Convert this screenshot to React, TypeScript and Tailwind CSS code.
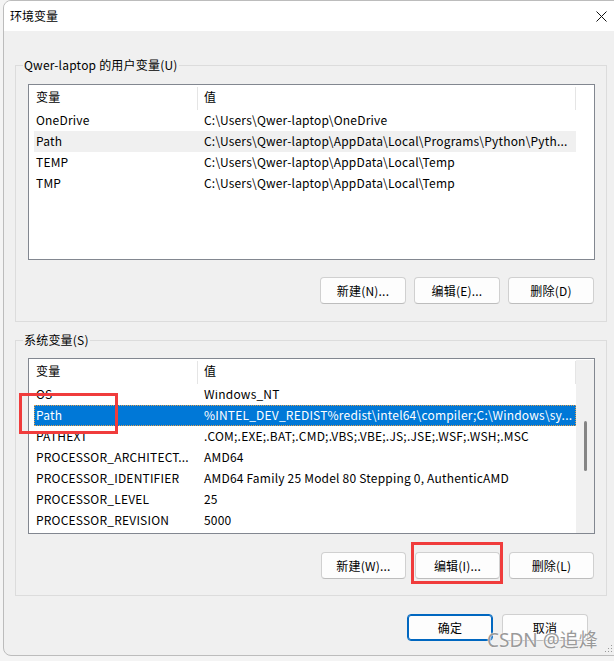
import React from "react";

type Row = { name: string; value: string; state?: "hover" | "selected" | "clipped" };

const userRows: Row[] = [
  { name: "OneDrive", value: "C:\\Users\\Qwer-laptop\\OneDrive" },
  { name: "Path", value: "C:\\Users\\Qwer-laptop\\AppData\\Local\\Programs\\Python\\Pyth...", state: "hover" },
  { name: "TEMP", value: "C:\\Users\\Qwer-laptop\\AppData\\Local\\Temp" },
  { name: "TMP", value: "C:\\Users\\Qwer-laptop\\AppData\\Local\\Temp" },
];

const systemRows: Row[] = [
  { name: "OS", value: "Windows_NT", state: "clipped" },
  { name: "Path", value: "%INTEL_DEV_REDIST%redist\\intel64\\compiler;C:\\Windows\\sy...", state: "selected" },
  { name: "PATHEXT", value: ".COM;.EXE;.BAT;.CMD;.VBS;.VBE;.JS;.JSE;.WSF;.WSH;.MSC" },
  { name: "PROCESSOR_ARCHITECT...", value: "AMD64" },
  { name: "PROCESSOR_IDENTIFIER", value: "AMD64 Family 25 Model 80 Stepping 0, AuthenticAMD" },
  { name: "PROCESSOR_LEVEL", value: "25" },
  { name: "PROCESSOR_REVISION", value: "5000" },
];

function ListHeader() {
  return (
    <div className="flex h-[25px] w-[542px] ml-[5px] shrink-0">
      <div className="w-[163px] pl-[2px] leading-[24px]">变量</div>
      <div className="w-px h-[23px] mt-[2px] bg-[#e5e5e5]" />
      <div className="flex-1 pl-[6px] leading-[24px]">值</div>
      <div className="w-px h-[23px] mt-[2px] bg-[#e5e5e5]" />
    </div>
  );
}

function ListRow({ row }: { row: Row }) {
  const cls =
    row.state === "selected"
      ? "bg-[#0078d7] text-white outline outline-1 outline-dotted outline-[#e0a050] -outline-offset-1"
      : row.state === "hover"
      ? "bg-[#f0f0f0]"
      : "";
  if (row.state === "clipped") {
    return (
      <div className="flex h-[21px] w-[542px] ml-[5px] shrink-0">
        <div className="mt-[6px] h-[15px] overflow-hidden flex w-full">
          <div className="-mt-[7px] w-[168px] pl-[2px] leading-[21px] whitespace-nowrap">{row.name}</div>
          <div className="-mt-[7px] flex-1 pl-[2px] leading-[21px] whitespace-nowrap">{row.value}</div>
        </div>
      </div>
    );
  }
  return (
    <div className={`flex h-[21px] w-[542px] ml-[5px] shrink-0 ${cls}`}>
      <div className="w-[168px] pl-[2px] leading-[20px] whitespace-nowrap overflow-hidden">{row.name}</div>
      <div className="flex-1 pl-[2px] leading-[20px] whitespace-nowrap overflow-hidden">{row.value}</div>
    </div>
  );
}

function Btn({ label, primary, wide }: { label: string; primary?: boolean; wide?: boolean }) {
  return (
    <div
      className={`${wide ? "w-[86px]" : "w-[85px]"} h-[27px] rounded-[4px] bg-[#fdfdfd] border flex items-center justify-center text-[12px] leading-none ${
        primary ? "border-[#0067c0] shadow-[inset_0_0_0_1px_#0067c0]" : "border-[#d0d0d0] border-b-[#bdbdbd]"
      }`}
    >
      {label}
    </div>
  );
}

function GroupBox({ title, height, children }: { title: string; height: string; children: React.ReactNode }) {
  return (
    <div className={`relative w-[592px] border border-[#dcdcdc] ${height}`}>
      <div className="absolute left-[7px] -top-[9px] px-[1px] bg-[#f0f0f0] leading-[16px]">{title}</div>
      {children}
    </div>
  );
}

export default function App() {
  return (
    <div
      className="relative w-[614px] h-[661px] overflow-hidden bg-[#f4f4f4] text-[12px] tracking-[0.2px] text-black"
      style={{ fontFamily: '"Noto Sans CJK SC", "Noto Sans", sans-serif' }}
    >
      <div className="ml-[3px] w-[630px] h-[656px] border border-[#bcbcbc] rounded-[8px] overflow-hidden bg-[#f0f0f0] flex flex-col">
        {/* title bar */}
        <div className="h-[30px] bg-white flex items-center pl-[6px] shrink-0">
          <span className="leading-[16px] tracking-normal">环境变量</span>
          <svg className="ml-[538px]" width="11" height="11" viewBox="0 0 11 11">
            <path d="M0.5 0.5 L10.5 10.5 M10.5 0.5 L0.5 10.5" stroke="#111" strokeWidth="1" fill="none" />
          </svg>
        </div>

        {/* body */}
        <div className="pl-[11px] pt-[34px] flex flex-col">
          <GroupBox title="Qwer-laptop 的用户变量(U)" height="h-[257px]">
            <div className="pl-[12px] pr-[11px] pt-[18px] flex flex-col">
              <div className="w-[567px] h-[176px] border border-[#828790] bg-white flex flex-col">
                <ListHeader />
                {userRows.map((r) => (
                  <ListRow key={r.name} row={r} />
                ))}
              </div>
              <div className="flex justify-end gap-[8px] mt-[17px] mr-px">
                <Btn label="新建(N)..." wide />
                <Btn label="编辑(E)..." wide />
                <Btn label="删除(D)" wide />
              </div>
            </div>
          </GroupBox>

          <div className="mt-[18px]">
            <GroupBox title="系统变量(S)" height="h-[256px]">
              <div className="pl-[12px] pr-[11px] pt-[17px] flex flex-col">
                <div className="w-[567px] h-[176px] border border-[#828790] bg-white flex">
                  <div className="w-[547px] flex flex-col overflow-hidden">
                    <ListHeader />
                    {systemRows.map((r) => (
                      <ListRow key={r.name} row={r} />
                    ))}
                  </div>
                  <div className="w-[18px] mt-[1px] bg-[#f0f0f0] flex flex-col">
                    <div className="ml-[8px] mt-[61px] w-[3px] h-[50px] rounded-full bg-[#858585]" />
                  </div>
                </div>
                <div className="flex justify-end gap-[9px] mt-[18px] mr-px">
                  <Btn label="新建(W)..." />
                  <Btn label="编辑(I)..." />
                  <Btn label="删除(L)" />
                </div>
              </div>
            </GroupBox>
          </div>

          <div className="w-[592px] flex justify-end gap-[9px] pr-[19px] mt-[18px]">
            <Btn label="确定" primary wide />
            <Btn label="取消" wide />
          </div>
        </div>
      </div>

      {/* annotations drawn over the screenshot */}
      <div className="absolute left-[19px] top-[393px] w-[99px] h-[41px] border-[3px] border-[#f03c3c]" />
      <div className="absolute left-[411px] top-[542px] w-[92px] h-[42px] border-[3px] border-[#f03c3c]" />

      {/* watermark */}
      <div
        className="absolute left-[487px] top-[627px] text-[19px] leading-[26px] tracking-normal text-[#9a9a9a] whitespace-nowrap [text-shadow:0_0_2px_#fff,0_0_1px_#fff]"
        style={{ fontFamily: '"Noto Sans", "Noto Sans CJK SC", sans-serif' }}
      >
        CSDN @追烽
      </div>

      {/* resize grip */}
      <svg className="absolute left-[604px] top-[644px]" width="9" height="9" viewBox="0 0 9 9">
        <rect x="7" y="1" width="1" height="1" fill="#9a9a9a" />
        <rect x="4" y="4" width="1" height="1" fill="#9a9a9a" />
        <rect x="7" y="4" width="1" height="1" fill="#9a9a9a" />
        <rect x="1" y="7" width="1" height="1" fill="#9a9a9a" />
        <rect x="4" y="7" width="1" height="1" fill="#9a9a9a" />
        <rect x="7" y="7" width="1" height="1" fill="#9a9a9a" />
      </svg>
    </div>
  );
}
